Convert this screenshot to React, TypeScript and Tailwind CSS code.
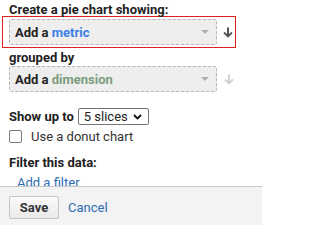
import React from 'react';

function DownArrow({color}: {color: string}) {
  return (
    <svg width="10" height="11" viewBox="0 0 10 11" className="block">
      <path d="M5 0.5V9.5" stroke={color} strokeWidth="2" />
      <path d="M1 5.5L5 9.5L9 5.5" stroke={color} strokeWidth="1.8" fill="none" />
    </svg>
  );
}

function Picker({word, wordClass}: {word: string; wordClass: string}) {
  return (
    <div className="w-[208px] h-[26px] border border-dashed border-[#b4b4b4] bg-[#eeeeee] rounded-[3px] flex items-center pl-[5px] pr-[7px]">
      <span className="font-bold text-[13px] text-[#222]">
        Add a <span className={wordClass}>{word}</span>
      </span>
      <span className="ml-auto w-0 h-0 border-l-[4px] border-r-[4px] border-t-[4px] border-l-transparent border-r-transparent border-t-[#b0b0b0]" />
    </div>
  );
}

export default function App() {
  return (
    <div className="w-[262px] h-[225px] flex flex-col bg-white text-[#222] font-['Roboto','Liberation_Sans',sans-serif] text-[13px] leading-none overflow-hidden">
      <div className="flex-1 overflow-hidden pl-[2px] pt-[3px]">
        <p className="pl-[7px] font-bold h-[13px]">Create a pie chart showing:</p>
        <div className="w-[234px] h-[32px] border border-[#e02020] pl-[6px] flex items-center">
          <Picker word="metric" wordClass="text-[#3c7ee6]" />
          <span className="ml-[6px]"><DownArrow color="#555" /></span>
        </div>
        <p className="pl-[7px] font-bold mt-[3px] h-[14px]">grouped by</p>
        <div className="pl-[7px] mt-[1px] flex items-center">
          <Picker word="dimension" wordClass="text-[#7c9c80]" />
          <span className="ml-[7px]"><DownArrow color="#d0d0d0" /></span>
        </div>
        <div className="pl-[7px] mt-[16px] flex items-center">
          <span className="font-bold">Show up to</span>
          <div className="ml-[4px] h-[17px] w-[71px] border border-[#767676] rounded-[2px] flex items-center pl-[5px] pr-[6px] text-[13px]">
            5 slices
            <svg width="9" height="6" viewBox="0 0 9 6" className="ml-auto">
              <path d="M1 1L4.5 4.5L8 1" stroke="#111" strokeWidth="1.8" fill="none" />
            </svg>
          </div>
        </div>
        <label className="pl-[7px] mt-[5px] flex items-center">
          <span className="w-[13px] h-[13px] border border-[#767676] rounded-[2px] bg-white" />
          <span className="ml-[9px] text-[#333]">Use a donut chart</span>
        </label>
        <p className="pl-[7px] mt-[13px] font-bold">Filter this data:</p>
        <p className="pl-[15px] mt-[7px] text-[#2c6cb5]">Add a filter</p>
      </div>
      <div className="h-[39px] shrink-0 border-t border-[#c8c8c8] bg-[#f3f3f3] flex items-center pl-[9px] pt-[2px]">
        <button className="w-[50px] h-[23px] border border-[#c6c6c6] rounded-[2px] bg-gradient-to-b from-[#fafafa] to-[#e9e9e9] font-bold text-[13px] text-[#333]">
          Save
        </button>
        <span className="ml-[9px] text-[#2c6cb5]">Cancel</span>
      </div>
    </div>
  );
}
